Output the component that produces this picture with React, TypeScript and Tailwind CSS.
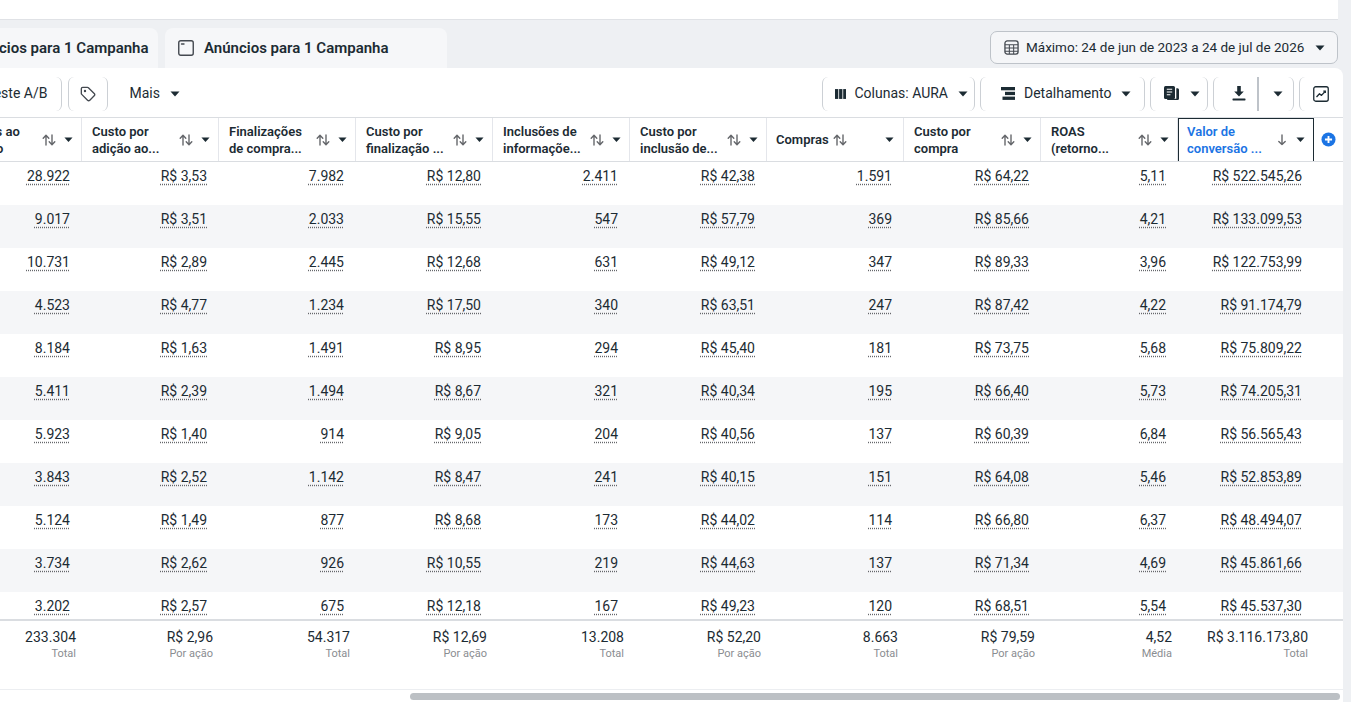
import React from "react";

const TEXT = "text-[#1c2b33]";

function SortIcon({ color = "#65676b" }: { color?: string }) {
  return (
    <svg width="14" height="12" viewBox="0 0 14 12" fill="none">
      <path d="M4 11V1.5M1.2 4.2L4 1.2l2.8 3" stroke={color} strokeWidth="1.4" strokeLinecap="round" strokeLinejoin="round" />
      <path d="M10 1v9.5M7.2 7.8L10 10.8l2.8-3" stroke={color} strokeWidth="1.4" strokeLinecap="round" strokeLinejoin="round" />
    </svg>
  );
}

function DownArrow() {
  return (
    <svg width="10" height="12" viewBox="0 0 10 12" fill="none">
      <path d="M5 1v9.5M1.8 7.4L5 10.6l3.2-3.2" stroke="#65676b" strokeWidth="1.4" strokeLinecap="round" strokeLinejoin="round" />
    </svg>
  );
}

function Caret({ size = 10, color = "#1c2b33" }: { size?: number; color?: string }) {
  return (
    <svg width={size} height={size * 0.6} viewBox="0 0 10 6">
      <path d="M0.5 0.5h9L5 5.5z" fill={color} />
    </svg>
  );
}

type Row = string[];
const rows: Row[] = [
  ["28.922", "R$ 3,53", "7.982", "R$ 12,80", "2.411", "R$ 42,38", "1.591", "R$ 64,22", "5,11", "R$ 522.545,26"],
  ["9.017", "R$ 3,51", "2.033", "R$ 15,55", "547", "R$ 57,79", "369", "R$ 85,66", "4,21", "R$ 133.099,53"],
  ["10.731", "R$ 2,89", "2.445", "R$ 12,68", "631", "R$ 49,12", "347", "R$ 89,33", "3,96", "R$ 122.753,99"],
  ["4.523", "R$ 4,77", "1.234", "R$ 17,50", "340", "R$ 63,51", "247", "R$ 87,42", "4,22", "R$ 91.174,79"],
  ["8.184", "R$ 1,63", "1.491", "R$ 8,95", "294", "R$ 45,40", "181", "R$ 73,75", "5,68", "R$ 75.809,22"],
  ["5.411", "R$ 2,39", "1.494", "R$ 8,67", "321", "R$ 40,34", "195", "R$ 66,40", "5,73", "R$ 74.205,31"],
  ["5.923", "R$ 1,40", "914", "R$ 9,05", "204", "R$ 40,56", "137", "R$ 60,39", "6,84", "R$ 56.565,43"],
  ["3.843", "R$ 2,52", "1.142", "R$ 8,47", "241", "R$ 40,15", "151", "R$ 64,08", "5,46", "R$ 52.853,89"],
  ["5.124", "R$ 1,49", "877", "R$ 8,68", "173", "R$ 44,02", "114", "R$ 66,80", "6,37", "R$ 48.494,07"],
  ["3.734", "R$ 2,62", "926", "R$ 10,55", "219", "R$ 44,63", "137", "R$ 71,34", "4,69", "R$ 45.861,66"],
  ["3.202", "R$ 2,57", "675", "R$ 12,18", "167", "R$ 49,23", "120", "R$ 68,51", "5,54", "R$ 45.537,30"],
];

const footer: [string, string][] = [
  ["233.304", "Total"],
  ["R$ 2,96", "Por ação"],
  ["54.317", "Total"],
  ["R$ 12,69", "Por ação"],
  ["13.208", "Total"],
  ["R$ 52,20", "Por ação"],
  ["8.663", "Total"],
  ["R$ 79,59", "Por ação"],
  ["4,52", "Média"],
  ["R$ 3.116.173,80", "Total"],
];

const headers: string[][] = [
  ["Adições ao", "carrinho"],
  ["Custo por", "adição ao..."],
  ["Finalizações", "de compra..."],
  ["Custo por", "finalização ..."],
  ["Inclusões de", "informaçõe..."],
  ["Custo por", "inclusão de..."],
  ["Compras"],
  ["Custo por", "compra"],
  ["ROAS", "(retorno..."],
  ["Valor de", "conversão ..."],
];

function colClass(i: number) {
  if (i === 0) return "w-[137px] ml-[-55px] shrink-0";
  if (i === 9) return "w-[136px] shrink-0";
  return "w-[137px] shrink-0";
}

function HeaderCell({ i, label }: { i: number; label: string[] }) {
  if (i === 6) {
    return (
      <div className={`${colClass(i)} h-full flex items-center pl-[9px] pr-[9px] border-r border-[#e4e6eb]`}>
        <div className={`flex-1 flex items-center gap-[4px] text-[13px] font-semibold ${TEXT}`}>
          Compras <SortIcon />
        </div>
        <Caret size={9} />
      </div>
    );
  }
  if (i === 9) {
    return (
      <div className={`${colClass(i)} h-full flex items-center pl-[8px] pr-[8px] border border-b-0 border-[#1c2b33]`}>
        <div className="flex-1 text-[13px] font-semibold leading-[17px] text-[#1b74e4]">
          <div>{label[0]}</div>
          <div>{label[1]}</div>
        </div>
        <div className="flex items-center gap-[9px]">
          <DownArrow />
          <Caret size={9} />
        </div>
      </div>
    );
  }
  return (
    <div className={`${colClass(i)} h-full flex items-center pl-[10px] pr-[8px] border-r border-[#e4e6eb]`}>
      <div className={`flex-1 text-[13px] font-semibold leading-[17px] whitespace-nowrap ${TEXT}`}>
        <div>{label[0]}</div>
        <div>{label[1]}</div>
      </div>
      <div className="flex items-center gap-[8px]">
        <SortIcon />
        <Caret size={9} />
      </div>
    </div>
  );
}

function ToolButton({ children, className = "" }: { children: React.ReactNode; className?: string }) {
  return (
    <div className={`h-[34px] flex items-center border-x border-[#ccd0d5] rounded-[6px] ${className}`}>{children}</div>
  );
}

export default function App() {
  return (
    <div className="w-[1351px] h-[702px] bg-[#eef0f3] overflow-hidden font-['Roboto',sans-serif] relative">
      {/* top white strip */}
      <div className="w-[1338px] h-[20px] bg-white border-b border-[#e0e2e6]" />

      {/* tabs row */}
      <div className="w-[1338px] h-[48px] flex items-end">
        <div className="h-[40px] w-[210px] ml-[-52px] bg-[#f6f7f9] rounded-t-[8px] flex items-center pl-[16px]">
          <span className={`text-[15px] font-semibold whitespace-nowrap ${TEXT}`}>Anúncios para 1 Campanha</span>
        </div>
        <div className="h-[40px] w-[282px] ml-[7px] bg-[#f6f7f9] rounded-t-[8px] flex items-center pl-[13px]">
          <svg width="16" height="16" viewBox="0 0 16 16" fill="none">
            <rect x="0.75" y="0.75" width="14.5" height="14.5" rx="2" stroke="#444950" strokeWidth="1.4" />
            <path d="M3.5 4h2.5" stroke="#444950" strokeWidth="1.4" strokeLinecap="round" />
          </svg>
          <span className={`ml-[10px] text-[15px] font-semibold whitespace-nowrap ${TEXT}`}>Anúncios para 1 Campanha</span>
        </div>
        <div className="ml-auto self-start mt-[11px] h-[33px] w-[348px] border border-[#bec3c9] rounded-[7px] bg-[#f5f6f8] flex items-center pl-[13px] pr-[12px]">
          <svg width="15" height="15" viewBox="0 0 16 16" fill="none">
            <rect x="1" y="1" width="14" height="14" rx="2.5" stroke="#444950" strokeWidth="1.4" />
            <path d="M1 5h14M1 8.5h14M1 12h14M5.7 5v10M10.3 5v10" stroke="#444950" strokeWidth="1.1" />
          </svg>
          <span className={`ml-[7px] text-[13.5px] whitespace-nowrap ${TEXT}`}>Máximo: 24 de jun de 2023 a 24 de jul de 2026</span>
          <span className="ml-auto"><Caret size={10} /></span>
        </div>
      </div>

      {/* main card */}
      <div className="w-[1343px] h-[634px] bg-white rounded-tr-[8px] flex flex-col overflow-hidden">
        {/* toolbar */}
        <div className="h-[49px] shrink-0 flex items-center pt-[2px] w-[1343px] overflow-hidden">
          <ToolButton className="ml-[-24px] pl-[10px] pr-[14px] rounded-l-none border-l-0">
            <span className={`text-[14px] whitespace-nowrap ${TEXT}`}>Teste A/B</span>
          </ToolButton>
          <ToolButton className="ml-[6px] w-[40px] justify-center">
            <svg width="16" height="16" viewBox="0 0 24 24" fill="none" stroke="#444950" strokeWidth="2" strokeLinecap="round" strokeLinejoin="round">
              <path d="M12.586 2.586A2 2 0 0 0 11.172 2H4a2 2 0 0 0-2 2v7.172a2 2 0 0 0 .586 1.414l8.704 8.704a2.426 2.426 0 0 0 3.42 0l6.58-6.58a2.426 2.426 0 0 0 0-3.42z" />
              <circle cx="7.5" cy="7.5" r=".8" fill="#444950" />
            </svg>
          </ToolButton>
          <div className="ml-[21px] flex items-center gap-[10px]">
            <span className={`text-[14px] ${TEXT}`}>Mais</span>
            <Caret size={10} />
          </div>

          <div className="ml-auto flex items-center gap-[5px] mr-[-2px]">
            <ToolButton className="w-[153px] pl-[12px] pr-[6px]">
              <svg width="14" height="12" viewBox="0 0 14 12">
                <rect x="0" y="0" width="4" height="12" fill="#1c2b33" />
                <rect x="5" y="0" width="4" height="12" fill="#1c2b33" />
                <rect x="10" y="0" width="4" height="12" fill="#1c2b33" />
              </svg>
              <span className={`ml-[8px] text-[14px] whitespace-nowrap ${TEXT}`}>Colunas: AURA</span>
              <span className="ml-[10px]"><Caret size={10} /></span>
            </ToolButton>
            <ToolButton className="w-[165px] pl-[20px]">
              <svg width="14" height="13" viewBox="0 0 14 13">
                <rect x="0" y="0" width="14" height="3.3" fill="#1c2b33" />
                <rect x="4" y="4.8" width="10" height="3.3" fill="#1c2b33" />
                <rect x="1.5" y="9.6" width="12.5" height="3.3" fill="#1c2b33" />
              </svg>
              <span className={`ml-[9px] text-[14px] whitespace-nowrap ${TEXT}`}>Detalhamento</span>
              <span className="ml-[10px]"><Caret size={10} /></span>
            </ToolButton>
            <ToolButton className="w-[58px] pl-[13px]">
              <svg width="16" height="15" viewBox="0 0 16 15">
                <rect x="0" y="0" width="11" height="13" rx="1.5" fill="#1c2b33" />
                <path d="M12.3 2.2h1.2a1.5 1.5 0 0 1 1.5 1.5v8.8a1.5 1.5 0 0 1-1.5 1.5H3.2v-1.2h9.1z" fill="#1c2b33" />
                <path d="M2.8 3.3h5.4M2.8 6h5.4M2.8 8.7h3.6" stroke="#fff" strokeWidth="1.1" />
              </svg>
              <span className="ml-[10px]"><Caret size={10} /></span>
            </ToolButton>
            <ToolButton className="w-[81px] pl-[18px]">
              <svg width="14" height="15" viewBox="0 0 14 15">
                <path d="M5.2 0h3.6v5.5h3L7 10.5 2.2 5.5h3z" fill="#1c2b33" />
                <rect x="0.5" y="12.4" width="13" height="2" rx="0.6" fill="#1c2b33" />
              </svg>
              <div className="ml-[11px] w-[2px] h-[34px] bg-[#bec3c9]" />
              <span className="ml-[14px]"><Caret size={10} /></span>
            </ToolButton>
            <ToolButton className="w-[46px] pl-[13px] rounded-r-none border-r-0">
              <svg width="16" height="16" viewBox="0 0 16 16" fill="none">
                <rect x="0.75" y="0.75" width="14.5" height="14.5" rx="2" stroke="#1c2b33" strokeWidth="1.3" />
                <path d="M3.5 11l3-3.3 2 1.7 3.8-4.2" stroke="#1c2b33" strokeWidth="1.3" strokeLinejoin="round" />
                <path d="M10.3 5.1h2v2" stroke="#1c2b33" strokeWidth="1.3" />
              </svg>
            </ToolButton>
          </div>
        </div>

        {/* header */}
        <div className="h-[45px] shrink-0 flex items-stretch border-y border-[#dadde1]">
          {headers.map((h, i) => (
            <HeaderCell key={i} i={i} label={h} />
          ))}
          <div className="w-[29px] flex items-center justify-center">
            <svg width="15" height="15" viewBox="0 0 16 16">
              <circle cx="8" cy="8" r="7.5" fill="#1b74e4" />
              <path d="M8 4.2v7.6M4.2 8h7.6" stroke="#fff" strokeWidth="2" />
            </svg>
          </div>
        </div>

        {/* body */}
        <div className="h-[457px] shrink-0 overflow-hidden">
          {rows.map((r, ri) => (
            <div key={ri} className={`h-[43px] flex ${ri % 2 === 1 ? "bg-[#f5f6f8]" : "bg-white"}`}>
              {r.map((v, ci) => (
                <div key={ci} className={`${colClass(ci)} pt-[2px] pr-[12px] text-right`}>
                  <span className={`text-[14px] leading-[18px] ${TEXT} underline decoration-dotted decoration-[#65676b] underline-offset-[3px]`}>{v}</span>
                </div>
              ))}
            </div>
          ))}
        </div>

        {/* footer */}
        <div className="h-[71px] shrink-0 flex border-t-2 border-b border-t-[#dadde1] border-b-[#eceef1]">
          {footer.map(([v, l], ci) => (
            <div key={ci} className={`${colClass(ci)} pt-[7px] pr-[6px] text-right`}>
              <div className={`text-[14px] leading-[18px] ${TEXT}`}>{v}</div>
              <div className="text-[11px] leading-[16px] text-[#8a8d91]">{l}</div>
            </div>
          ))}
        </div>

        {/* scrollbar */}
        <div className="h-[12px] shrink-0 flex items-center">
          <div className="ml-[410px] w-[930px] h-[7px] rounded-full bg-[#bcc0c4]" />
        </div>
      </div>
    </div>
  );
}
